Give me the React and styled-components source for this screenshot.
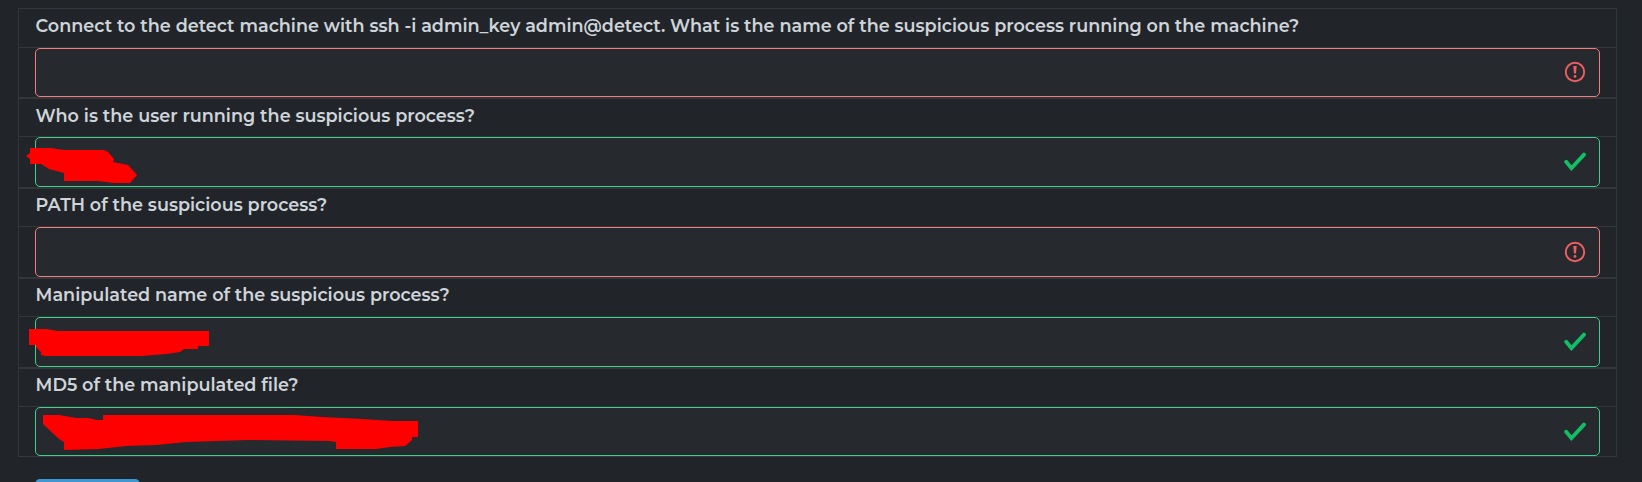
import React from 'react';
import styled, { createGlobalStyle } from 'styled-components';

const GlobalStyle = createGlobalStyle`
  * {
    box-sizing: border-box;
  }

  body {
    margin: 0;
    background: #212529;
    font-family: Montserrat, Inter, sans-serif;
    overflow: hidden;
  }
`;

const colors = {
  line: '#32373b',
  valid: '#3ecf8a',
  invalid: '#f47c7f',
};

const Page = styled.main`
  height: 482px;
  padding: 8px 25px 0 18px;
  overflow: hidden;
`;

const QuestionCard = styled.section`
  border: 1px solid ${colors.line};
`;

const QuestionTitle = styled.h2`
  height: ${({ $height }) => $height}px;
  margin: 0;
  padding: 0 16px 0 16.6px;
  color: #ced4da;
  font-size: 17.6px;
  font-weight: 600;
  line-height: ${({ $lineHeight }) => $lineHeight}px;
  white-space: nowrap;
`;

const AnswerRow = styled.div`
  border-top: 1px solid ${colors.line};
  padding: 0 16px;
`;

const AnswerField = styled.div`
  position: relative;
  display: flex;
  align-items: flex-start;
  justify-content: flex-end;
  height: ${({ $height }) => $height}px;
  padding: ${({ $iconTop }) => $iconTop}px 13px 0 0;
  border: 1px solid ${({ $valid }) => ($valid ? colors.valid : colors.invalid)};
  border-radius: 5px;
  background: #262a2e;
`;

const StatusSvg = styled.svg`
  display: block;
  width: 22px;
  height: 22px;
`;

const Scribble = styled.svg`
  position: absolute;
  left: -10px;
  top: -1px;
  width: 400px;
  height: 50px;
  fill: #ff0000;
`;

const SubmitButton = styled.button`
  display: block;
  width: 105px;
  height: 40px;
  margin: 22px 0 0 17px;
  border: 0;
  border-radius: 5px;
  background: #3d97d3;
`;

const CheckIcon = () => (
  <StatusSvg viewBox="0 0 22 22">
    <path
      d="M2.2 10.8L7.4 17.2L20 3.6"
      fill="none"
      stroke="#12bf67"
      strokeWidth="3.8"
      strokeLinecap="round"
    />
  </StatusSvg>
);

const AlertIcon = () => (
  <StatusSvg viewBox="0 0 22 22">
    <circle cx="11" cy="11" r="9.2" fill="none" stroke="#f05d62" strokeWidth="1.9" />
    <path d="M9.3 5h3.4l-.7 7.6h-2z" fill="#f05d62" />
    <circle cx="11" cy="15.4" r="1.4" fill="#f05d62" />
  </StatusSvg>
);

// scribble points start 9px left of the field and level with its top edge
const questions = [
  {
    title: 'Connect to the detect machine with ssh -i admin_key admin@detect. What is the name of the suspicious process running on the machine?',
    valid: false,
    titleHeight: 38,
    lineHeight: 34,
    fieldHeight: 49,
    iconTop: 12,
  },
  {
    title: 'Who is the user running the suspicious process?',
    valid: true,
    titleHeight: 37,
    lineHeight: 34,
    fieldHeight: 50,
    iconTop: 13,
    scribble: '0,19 4,16 4,11 24,11 38,13 78,13 82,15 88,22 87,25 102,28 111,38 104,46 88,46 72,44 38,44 38,36 23,32 15,27 4,27 4,22',
  },
  {
    title: 'PATH of the suspicious process?',
    valid: false,
    titleHeight: 37,
    lineHeight: 32,
    fieldHeight: 50,
    iconTop: 13,
  },
  {
    title: 'Manipulated name of the suspicious process?',
    valid: true,
    titleHeight: 37,
    lineHeight: 32,
    fieldHeight: 50,
    iconTop: 13,
    scribble: '3,12 20,12 32,14 183,14 183,29 172,29 172,32 158,32 154,35 140,37 116,39 20,39 15,38 15,35 10,30 10,28 3,28',
  },
  {
    title: 'MD5 of the manipulated file?',
    valid: true,
    titleHeight: 37,
    lineHeight: 32,
    fieldHeight: 49,
    iconTop: 13,
    scribble: '17,8 33,8 50,11 62,11 71,13 77,13 77,8 268,8 296,10 336,12 366,14 392,14 392,30 386,30 386,33 379,39 364,40 350,42 310,42 310,35 303,34 222,33 160,35 130,38 100,39 73,42 38,43 38,35 33,32 17,17',
  },
];

const App = () => (
  <>
    <GlobalStyle />
    <Page>
      {questions.map(({ title, valid, titleHeight, lineHeight, fieldHeight, iconTop, scribble }) => (
        <QuestionCard key={title}>
          <QuestionTitle $height={titleHeight} $lineHeight={lineHeight}>
            {title}
          </QuestionTitle>
          <AnswerRow>
            <AnswerField $valid={valid} $height={fieldHeight} $iconTop={iconTop}>
              {scribble && (
                <Scribble viewBox="0 0 400 50">
                  <polygon points={scribble} />
                </Scribble>
              )}
              {valid ? <CheckIcon /> : <AlertIcon />}
            </AnswerField>
          </AnswerRow>
        </QuestionCard>
      ))}
      <SubmitButton />
    </Page>
  </>
);

export default App;
